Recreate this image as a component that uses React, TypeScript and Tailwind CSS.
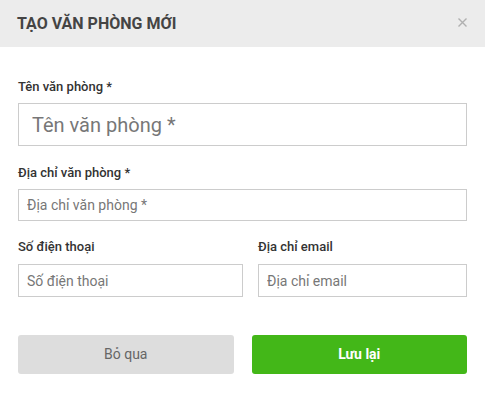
import React from "react";

const App: React.FC = () => {
  return (
    <div className="w-[485px] h-[402px] bg-white font-['Roboto',sans-serif] text-[#333]">
      {/* Header */}
      <div className="h-[47px] bg-[#ececec] flex items-center justify-between pl-[17px] pr-[18px]">
        <h2 className="text-[16px] font-bold text-[#444] leading-none">TẠO VĂN PHÒNG MỚI</h2>
        <svg width="9" height="9" viewBox="0 0 9 9" className="text-[#b0b0b0] -mt-[2px]">
          <path d="M0.5 0.5 L8.5 8.5 M8.5 0.5 L0.5 8.5" stroke="currentColor" strokeWidth="1.4" />
        </svg>
      </div>

      {/* Body */}
      <div className="px-[18px] pt-[31px]">
        <label className="block text-[13px] font-medium leading-[18px] mb-[7px]">Tên văn phòng *</label>
        <input
          className="w-full h-[43px] border border-[#ccc] px-[13px] text-[20px] placeholder:text-[#777] outline-none"
          placeholder="Tên văn phòng *"
        />

        <label className="block text-[13px] font-medium leading-[18px] mt-[18px] mb-[7px]">Địa chỉ văn phòng *</label>
        <input
          className="w-full h-[32px] border border-[#ccc] px-[8px] text-[14px] placeholder:text-[#777] outline-none"
          placeholder="Địa chỉ văn phòng *"
        />

        <div className="grid grid-cols-[225px_1fr] gap-[15px] mt-[17px]">
          <div>
            <label className="block text-[13px] font-medium leading-[18px] mb-[8px]">Số điện thoại</label>
            <input
              className="w-full h-[33px] border border-[#ccc] px-[8px] text-[14px] placeholder:text-[#777] outline-none"
              placeholder="Số điện thoại"
            />
          </div>
          <div>
            <label className="block text-[13px] font-medium leading-[18px] mb-[8px]">Địa chỉ email</label>
            <input
              className="w-full h-[33px] border border-[#ccc] px-[8px] text-[14px] placeholder:text-[#777] outline-none"
              placeholder="Địa chỉ email"
            />
          </div>
        </div>

        <div className="grid grid-cols-2 gap-[18px] mt-[38px]">
          <button className="h-[39px] rounded-[3px] bg-[#dddddd] text-[#666] text-[14px]">Bỏ qua</button>
          <button className="h-[39px] rounded-[3px] bg-[#43b718] text-white text-[14px] font-bold">Lưu lại</button>
        </div>
      </div>
    </div>
  );
};

export default App;
